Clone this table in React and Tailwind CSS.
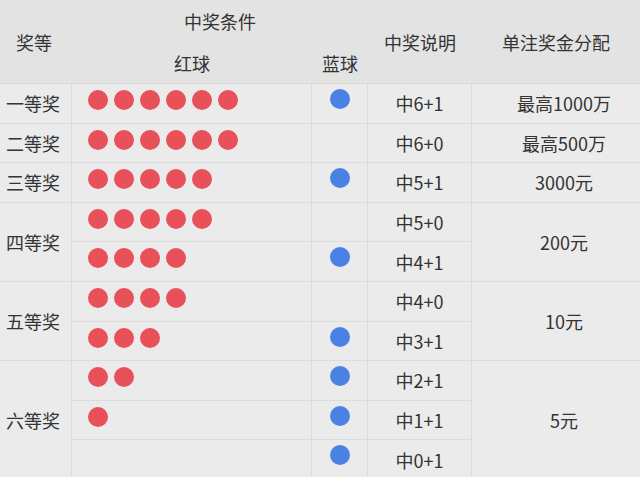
import React from "react";

const rowStart = [
  "row-start-3",
  "row-start-4",
  "row-start-5",
  "row-start-6",
  "row-start-7",
  "row-start-8",
  "row-start-9",
  "row-start-10",
  "row-start-11",
  "row-start-12",
];

const rows = [
  { red: 6, blue: true, desc: "中6+1" },
  { red: 6, blue: false, desc: "中6+0" },
  { red: 5, blue: true, desc: "中5+1" },
  { red: 5, blue: false, desc: "中5+0" },
  { red: 4, blue: true, desc: "中4+1" },
  { red: 4, blue: false, desc: "中4+0" },
  { red: 3, blue: true, desc: "中3+1" },
  { red: 2, blue: true, desc: "中2+1" },
  { red: 1, blue: true, desc: "中1+1" },
  { red: 0, blue: true, desc: "中0+1" },
];

const levels = [
  { label: "一等奖", cls: "row-start-3" },
  { label: "二等奖", cls: "row-start-4" },
  { label: "三等奖", cls: "row-start-5" },
  { label: "四等奖", cls: "row-start-6 row-span-2" },
  { label: "五等奖", cls: "row-start-8 row-span-2" },
  { label: "六等奖", cls: "row-start-10 row-span-3" },
];

const prizes = [
  { label: "最高1000万", cls: "row-start-3" },
  { label: "最高500万", cls: "row-start-4" },
  { label: "3000元", cls: "row-start-5" },
  { label: "200元", cls: "row-start-6 row-span-2" },
  { label: "10元", cls: "row-start-8 row-span-2" },
  { label: "5元", cls: "row-start-10 row-span-3" },
];

const Ball = ({ color }) => (
  <span className={`block w-[20px] h-[20px] rounded-full ${color}`} />
);

export default function App() {
  return (
    <div
      className="w-[640px] h-[477px] overflow-hidden bg-[#ebebeb] text-[#333333] text-[18px] leading-none"
      style={{ fontFamily: '"Noto Sans CJK SC", "Noto Sans", sans-serif' }}
    >
      <div className="grid grid-cols-[72px_240px_56px_104px_168px] grid-rows-[42px_42px_repeat(10,39.6px)]">
        {/* header */}
        <div className="col-start-1 row-start-1 row-span-2 bg-[#e3e3e3] border-b border-[#dadada] flex items-center justify-center pr-[4px]">
          奖等
        </div>
        <div className="col-start-2 col-span-2 row-start-1 bg-[#e3e3e3] flex items-center justify-center">
          中奖条件
        </div>
        <div className="col-start-2 row-start-2 bg-[#e3e3e3] border-b border-[#dadada] flex items-center justify-center">
          红球
        </div>
        <div className="col-start-3 row-start-2 bg-[#e3e3e3] border-b border-[#dadada] flex items-center justify-center">
          蓝球
        </div>
        <div className="col-start-4 row-start-1 row-span-2 bg-[#e3e3e3] border-b border-[#dadada] flex items-center justify-center">
          中奖说明
        </div>
        <div className="col-start-5 row-start-1 row-span-2 bg-[#e3e3e3] border-b border-[#dadada] flex items-center justify-center">
          单注奖金分配
        </div>

        {/* level column */}
        {levels.map((l) => (
          <div
            key={l.label}
            className={`col-start-1 ${l.cls} border-b border-r border-[#dcdcdc] flex items-center justify-center pr-[5px]`}
          >
            {l.label}
          </div>
        ))}

        {/* red, blue, desc */}
        {rows.map((r, i) => (
          <React.Fragment key={r.desc}>
            <div
              className={`col-start-2 ${rowStart[i]} border-b border-r border-[#dcdcdc] flex items-start gap-[6px] pl-[16px] pt-[6px]`}
            >
              {Array.from({ length: r.red }).map((_, k) => (
                <Ball key={k} color="bg-[#e8505a]" />
              ))}
            </div>
            <div
              className={`col-start-3 ${rowStart[i]} border-b border-r border-[#dcdcdc] flex items-start justify-center pt-[5px]`}
            >
              {r.blue && <Ball color="bg-[#4a82e4]" />}
            </div>
            <div
              className={`col-start-4 ${rowStart[i]} border-b border-r border-[#dcdcdc] flex items-center justify-center`}
            >
              {r.desc}
            </div>
          </React.Fragment>
        ))}

        {/* prize column */}
        {prizes.map((p) => (
          <div
            key={p.label}
            className={`col-start-5 ${p.cls} border-b border-[#dcdcdc] flex items-center justify-center pl-[16px]`}
          >
            {p.label}
          </div>
        ))}
      </div>
    </div>
  );
}
